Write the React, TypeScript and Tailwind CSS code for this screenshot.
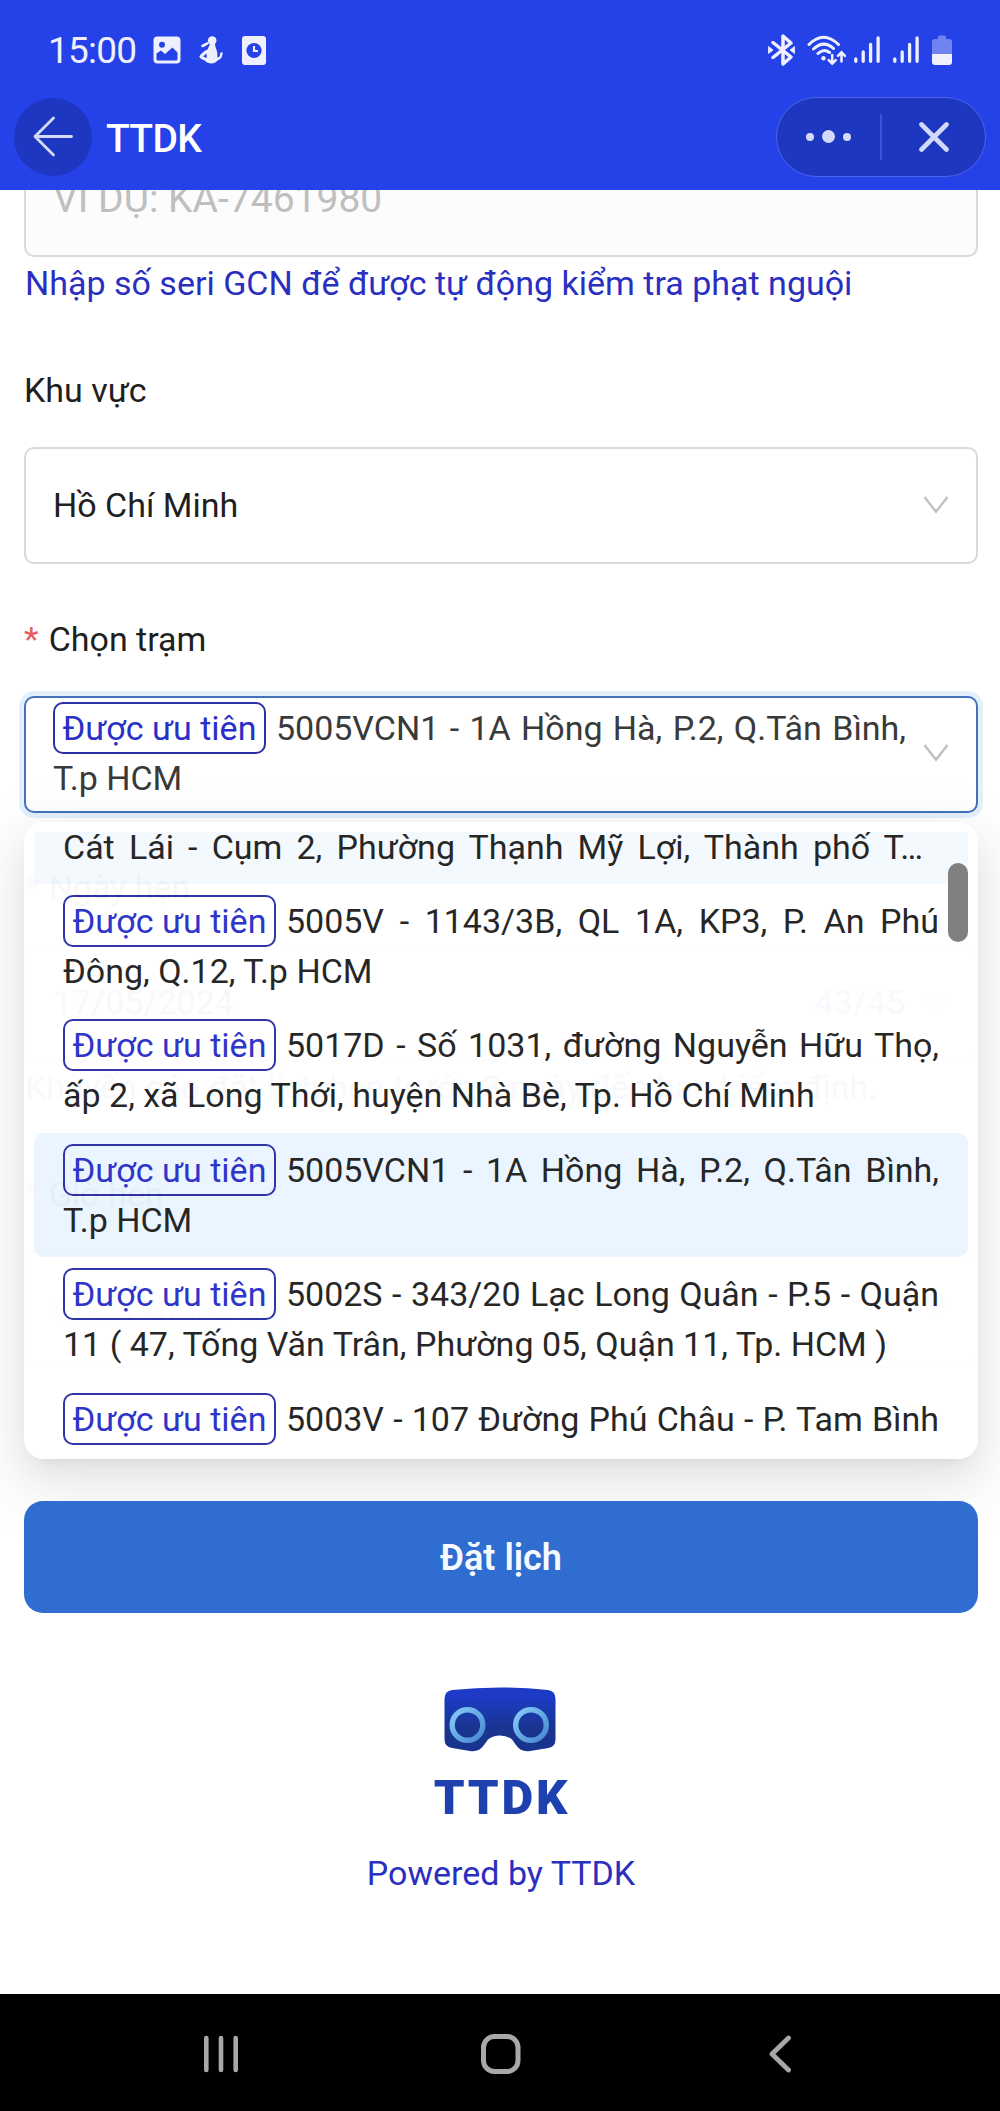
import React from "react";

const stations = [
  { lines: ["5005V - 1143/3B, QL 1A, KP3, P. An Phú", "Đông, Q.12, T.p HCM"] },
  { lines: ["5017D - Số 1031, đường Nguyễn Hữu Thọ,", "ấp 2, xã Long Thới, huyện Nhà Bè, Tp. Hồ Chí Minh"] },
  { lines: ["5005VCN1 - 1A Hồng Hà, P.2, Q.Tân Bình,", "T.p HCM"], selected: true },
  { lines: ["5002S - 343/20 Lạc Long Quân - P.5 - Quận", "11 ( 47, Tống Văn Trân, Phường 05, Quận 11, Tp. HCM )"] },
  { lines: ["5003V - 107 Đường Phú Châu - P. Tam Bình"] },
];

function SignalIcon() {
  return (
    <svg width="26" height="28" viewBox="0 0 26 28" stroke="#eef0ff" strokeWidth="3.3" strokeLinecap="round">
      <path d="M1.800 23v2.300M9.200 16v9.300M16.600 8.500v16.800M24.100 2v23.300" />
    </svg>
  );
}

function StatusBar() {
  return (
    <div className="flex h-[97px] items-center pt-[3px] pl-[48px] pr-[48px] text-[#eef0ff]">
      <span className="w-[89px] text-[37px] leading-none tracking-[-0.800px]">15:00</span>
      <svg className="ml-[16px]" width="28" height="28" viewBox="0 0 28 28">
        <rect x="0.5" y="0.5" width="27" height="27" rx="4" fill="#eef0ff" />
        <circle cx="9" cy="8.800" r="3" fill="#2541e8" />
        <path d="M3.500 20v-2.500l4.500-3 4 3.500 7.500-6.500 5 5V23q0 1.500-1.500 1.500H5Q3.500 24.500 3.500 23z" fill="#2541e8" />
      </svg>
      <svg className="ml-[18px]" width="25" height="28" viewBox="0 0 25 28">
        <circle cx="13.200" cy="4.500" r="4.300" fill="#eef0ff" />
        <path d="M3.500 10 8.500 7.300" stroke="#eef0ff" strokeWidth="2.600" strokeLinecap="round" />
        <path d="M11 8h5c0 3 2 6 2.300 9 .2 2.500-.3 4 .7 4.500 1.500-.5 2.500-2 2-4.500l2.500-1c.5 4-1.500 7.500-5 8.500-1.500 2-3.500 3-6 3-3 0-5-.8-6.500-3C3.500 24 1 22.500.3 20.500 2 17.500 5 15 8.500 13.500z" fill="#eef0ff" />
        <path d="m4 20.500 3.500-3 .3 4.500z" fill="#2541e8" />
      </svg>
      <svg className="ml-[18px]" width="24" height="29" viewBox="0 0 24 29">
        <rect width="24" height="29" rx="3" fill="#eef0ff" />
        <circle cx="12" cy="14.500" r="7.600" fill="#2541e8" />
        <path d="M12 10v5h4" fill="none" stroke="#eef0ff" strokeWidth="2.200" />
      </svg>

      <div className="ml-auto flex items-center">
        <svg width="27" height="32" viewBox="0 0 27 32">
          <path d="m5 8.500 18 14.500-8 7v-28l8 7L5 23.500" fill="none" stroke="#eef0ff" strokeWidth="3.500" strokeLinejoin="round" strokeLinecap="round" />
          <path d="M0.500 12.500 5 16l-4.500 3.500zM26.500 12.500 22 16l4.500 3.500z" fill="#eef0ff" stroke="#eef0ff" strokeWidth="0.800" strokeLinejoin="round" />
        </svg>
        <svg className="ml-[12px]" width="39" height="30" viewBox="0 0 39 30" fill="none" stroke="#eef0ff" strokeWidth="3" strokeLinecap="round">
          <path d="M2 9.500Q16.500-5 31.500 9.500M6.500 14Q17 4.500 26.500 13.500M11 18.500Q16.500 13 22.500 17.500" />
          <circle cx="16.500" cy="23.300" r="2.200" fill="#eef0ff" stroke="none" />
          <path d="M25.200 20v8.500M21.700 25.200l3.500 3.500 3.500-3.500M34.500 26.500v-8.500M31 20.800l3.500-3.500 3.500 3.500" strokeWidth="2.500" />
        </svg>
        <div className="ml-[8px] flex gap-[13px]">
          <SignalIcon />
          <SignalIcon />
        </div>
        <svg className="ml-[13px]" width="20" height="30" viewBox="0 0 20 30">
          <path d="M6 2q0-1.500 1.500-1.500h5Q14 .5 14 2v2h3q3 0 3 3v12H0V7q0-3 3-3h3z" fill="#7083f0" />
          <path d="M0 19h20v8q0 3-3 3H3q-3 0-3-3z" fill="#eef0ff" />
        </svg>
      </div>
    </div>
  );
}

function TitleBar() {
  return (
    <div className="flex h-[79px] items-center pl-[14px] pr-[14px]">
      <div className="flex h-[78px] w-[78px] items-center justify-center rounded-full bg-[#1e37c0]">
        <svg width="40" height="41" viewBox="0 0 40 41" fill="none" stroke="#d3daf9" strokeWidth="2.800" strokeLinecap="round" strokeLinejoin="round">
          <path d="M20.500 2 2 20.500 20.500 39M2 20.500h36.500" />
        </svg>
      </div>
      <h1 className="ml-[14px] mt-[5px] text-[39px] font-medium leading-none tracking-[-0.700px] text-white">TTDK</h1>
      <div className="ml-auto flex h-[80px] w-[210px] items-center rounded-full border border-[#4c63e6] bg-[#1e37c0]">
        <div className="flex flex-1 items-center justify-center gap-[8px]">
          <span className="h-[8px] w-[8px] rounded-full bg-[#d3daf9]" />
          <span className="h-[13px] w-[13px] rounded-full bg-[#d3daf9]" />
          <span className="h-[8px] w-[8px] rounded-full bg-[#d3daf9]" />
        </div>
        <div className="h-[46px] w-[2px] bg-[#3b53dc]" />
        <div className="flex w-[103px] justify-center">
          <svg width="30" height="30" viewBox="0 0 30 30" stroke="#d3daf9" strokeWidth="4.600" strokeLinecap="round">
            <path d="m2.500 2.500 25 25M27.500 2.500l-25 25" />
          </svg>
        </div>
      </div>
    </div>
  );
}

function PriorityTag() {
  return (
    <span className="mr-[10px] rounded-[10px] border-[2px] border-[#2b2fa8] px-[7.500px] py-[4px] text-[#2a2fc8]">
      Được ưu tiên
    </span>
  );
}

function Arrow() {
  return (
    <svg className="shrink-0" width="26" height="18" viewBox="0 0 26 18" fill="none" stroke="#bfbfbf" strokeWidth="2.300">
      <path d="m1.500 1 11.500 14.800L24.500 1" />
    </svg>
  );
}

function Label({ children, required }: { children: React.ReactNode; required?: boolean }) {
  return (
    <div className="flex h-[112px] items-center pb-[2px]">
      {required && <span className="mr-[10px] text-[#e4605e]">*</span>}
      {children}
    </div>
  );
}

function Field({ children, focused }: { children: React.ReactNode; focused?: boolean }) {
  return (
    <div
      className={`flex h-[117px] items-center justify-between rounded-[10px] border-2 bg-white pb-[2px] pl-[27px] pr-[27px] ${
        focused ? "border-[#4571bd] shadow-[0_0_0_5px_#e4f1fd]" : "border-[#d9d9d9]"
      }`}
    >
      {children}
    </div>
  );
}

function StationDropdown() {
  return (
    <div className="absolute left-[24px] top-[632px] h-[637px] w-[954px] rounded-[20px] bg-white p-[10px] opacity-[0.970]">
      <div className="flex h-[617px] flex-col overflow-hidden">
        <div className="h-[52px] shrink-0 bg-[#f4f9fe] pl-[29px] pr-[45px]">
          <div className="-mt-[10px] whitespace-nowrap [text-align-last:justify]">
            Cát Lái - Cụm 2, Phường Thạnh Mỹ Lợi, Thành phố T…
          </div>
        </div>
        {stations.map((station) => (
          <div
            key={station.lines[0]}
            className={`h-[124.400px] shrink-0 rounded-[10px] px-[29px] pt-[12px] ${station.selected ? "bg-[#eaf5ff]" : ""}`}
          >
            <div className="flex whitespace-nowrap">
              <span className="shrink-0"><PriorityTag /></span>
              <span className="flex-1 [text-align-last:justify]">{station.lines[0]}</span>
            </div>
            <div className="whitespace-nowrap">{station.lines[1]}</div>
          </div>
        ))}
      </div>
      <div className="absolute right-[10px] top-[41px] h-[79px] w-[20px] rounded-full bg-[#7c7c7c]" />
    </div>
  );
}

function Logo() {
  return (
    <div className="flex flex-col items-center pr-[3px]">
      <svg width="112" height="65" viewBox="0 0 112 65">
        <defs>
          <linearGradient id="visor" x1="0" y1="0" x2="0" y2="1">
            <stop offset="0.150" stopColor="#1d3bc6" />
            <stop offset="0.650" stopColor="#18348f" />
          </linearGradient>
          <linearGradient id="lens" x1="0" y1="0" x2="1" y2="1">
            <stop offset="0" stopColor="#86cbf7" />
            <stop offset="1" stopColor="#4688d2" />
          </linearGradient>
        </defs>
        <path
          d="M8 3Q56-2 104 3q7.500 1 7.500 9v40q0 8-7 9l-20 3.200q-8 .5-12.500-6.200l-4-5.500Q63 48.500 56 48.500t-12 4L40 58q-4.500 6.700-12.500 6.200L8 61Q.5 60 .5 52V12Q.5 4 8 3z"
          fill="url(#visor)"
        />
        <circle cx="23.500" cy="38" r="15.300" fill="none" stroke="url(#lens)" strokeWidth="5.400" />
        <circle cx="87" cy="38" r="15.300" fill="none" stroke="url(#lens)" strokeWidth="5.400" />
      </svg>
      <div className="mt-[21px] pl-[5px] text-[49px] font-black leading-[50px] tracking-[2.800px] text-[#1f41b0]">TTDK</div>
    </div>
  );
}

function NavBar() {
  return (
    <div className="flex h-[117px] items-center bg-black pt-[3px] pl-[203px] pr-[208px]">
      <svg width="36" height="38" viewBox="0 0 36 38" stroke="#a8a8a8" strokeWidth="4.600" strokeLinecap="round">
        <path d="M3.300 3v32M18 3v32M32.700 3v32" />
      </svg>
      <svg className="ml-[241px]" width="41" height="40" viewBox="0 0 41 40" fill="none" stroke="#a8a8a8" strokeWidth="5">
        <rect x="3.500" y="2.500" width="34.500" height="35" rx="11" />
      </svg>
      <svg className="ml-auto" width="24" height="38" viewBox="0 0 24 38" fill="none" stroke="#a8a8a8" strokeWidth="4.800" strokeLinecap="round" strokeLinejoin="round">
        <path d="M20.500 3 4 19l16.500 16" />
      </svg>
    </div>
  );
}

export default function App() {
  return (
    <div className="flex h-[2111px] w-[1000px] flex-col overflow-hidden bg-white font-[Roboto,sans-serif] text-[34px] leading-[50px] text-[#1f1f1f]">
      <header className="h-[190px] shrink-0 bg-[#2541e8]">
        <StatusBar />
        <TitleBar />
      </header>

      <main className="relative h-[1804px] shrink-0 overflow-hidden pl-[24px] pr-[22px]">
        <div className="-mt-[50px] flex h-[117px] items-center rounded-[10px] border-2 border-[#d9d9d9] bg-[#fcfcfc] px-[27px] text-[39px] text-[#bfbfbf]">
          VÍ DỤ: KA-7461980
        </div>
        <div className="h-[78px] pl-px pt-px text-[#2a2fc0]">Nhập số seri GCN để được tự động kiểm tra phạt nguội</div>

        <Label>Khu vực</Label>
        <Field>
          <span>Hồ Chí Minh</span>
          <Arrow />
        </Field>

        <div className="mt-[19.500px]">
          <Label required>Chọn trạm</Label>
          <Field focused>
            <div className="w-[853px] text-[#3a3a3a]">
              <div className="flex whitespace-nowrap">
                <span className="shrink-0"><PriorityTag /></span>
                <span className="flex-1 [text-align-last:justify]">5005VCN1 - 1A Hồng Hà, P.2, Q.Tân Bình,</span>
              </div>
              <div>T.p HCM</div>
            </div>
            <Arrow />
          </Field>
        </div>

        <div className="mt-[19.500px]">
          <Label required>Ngày hẹn</Label>
          <Field>
            <span>17/05/2024</span>
            <span className="ml-auto mr-[18px] text-[#2a2fc0]">43/45</span>
            <Arrow />
          </Field>
          <div className="h-[78px] pl-px pt-px text-[#2a2fc0]">
            Khuyến cáo đặt lịch hẹn trước 3 ngày đến hạn kiểm định.
          </div>
        </div>

        <Label required>Giờ hẹn</Label>
        <Field>
          <span className="text-[#bfbfbf]">Chọn khung giờ</span>
          <Arrow />
        </Field>

        <div className="pointer-events-none absolute left-[24px] top-[632px] h-[637px] w-[954px] rounded-[20px] shadow-[0_15px_39px_0_rgba(0,0,0,0.08),0_7px_15px_-10px_rgba(0,0,0,0.12),0_22px_68px_19px_rgba(0,0,0,0.05)]" />
        <StationDropdown />

        <button className="relative mt-[133px] block h-[112px] w-full rounded-[19px] bg-[#306dd0] pt-[2px] text-[36px] font-semibold text-[#f4faff]">
          Đặt lịch
        </button>

        <div className="mt-[74px]">
          <Logo />
        </div>
        <p className="mt-[25px] text-center text-[#2a2fc0]">Powered by TTDK</p>
      </main>

      <NavBar />
    </div>
  );
}
